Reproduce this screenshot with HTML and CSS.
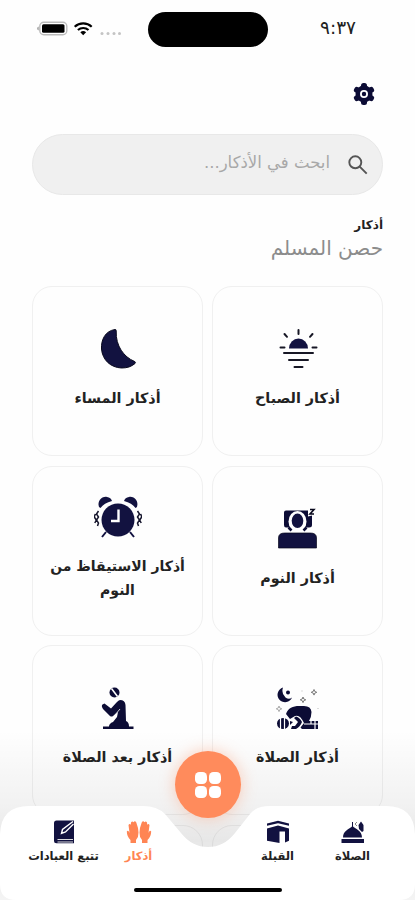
FILE: index.html
```html
<!DOCTYPE html>
<html lang="ar" dir="rtl">
<head>
    <meta charset="UTF-8">
    <meta name="viewport" content="width=device-width, initial-scale=1.0">
    <title>أذكار</title>
    <link rel="stylesheet" href="styles.css">
</head>
<body>
    <div class="screen">
        <div class="status-bar">
            <span class="time">٩:٣٧</span>
            <div class="island"></div>
            <div class="status-icons">
                <svg width="86" height="18" viewBox="0 0 86 18">
                    <rect x="2.800" y="3.200" width="27" height="12.600" rx="4" fill="#fff" stroke="#bbb" stroke-width="1.4"/>
                    <path d="M1.800 7.500v4Q0 11 0 9.500T1.800 7.500" fill="#aaa"/>
                    <rect x="5" y="5.200" width="22.500" height="8.600" rx="1.500" fill="#000"/>
                    <g fill="none" stroke="#000" stroke-width="2.200">
                        <path d="M37.700 7.800a12.500 12.500 0 0 1 17 0"/>
                        <path d="M40.900 11a8 8 0 0 1 10.600 0"/>
                    </g>
                    <path d="M43.300 13.300a4.500 4.500 0 0 1 5.800 0l-2.900 3z" fill="#000"/>
                    <g fill="#c4c4c4">
                        <circle cx="65" cy="14.500" r="1.500"/>
                        <circle cx="71" cy="14.500" r="1.500"/>
                        <circle cx="77" cy="14.500" r="1.500"/>
                        <circle cx="82.500" cy="14.500" r="1.500"/>
                    </g>
                </svg>
            </div>
        </div>

        <div class="toolbar">
            <svg width="22" height="24" viewBox="-11 -12 22 24">
                <g fill="#0c0c35">
                    <circle r="8.500"/>
                    <rect x="-3" y="-11" width="6" height="22" rx="2.500"/>
                    <rect x="-3" y="-11" width="6" height="22" rx="2.500" transform="rotate(60)"/>
                    <rect x="-3" y="-11" width="6" height="22" rx="2.500" transform="rotate(120)"/>
                </g>
                <circle r="3.100" fill="#0c0c35" stroke="#fff" stroke-width="1.800"/>
            </svg>
        </div>

        <div class="search">
            <svg width="20" height="20" viewBox="0 0 20 20" fill="none" stroke="#555" stroke-width="1.900">
                <circle cx="7.300" cy="7.300" r="6"/>
                <path d="M11.700 11.700l7 7"/>
            </svg>
            <span>ابحث في الأذكار...</span>
        </div>

        <h1 class="title">أذكار</h1>
        <p class="subtitle">حصن المسلم</p>

        <div class="grid">
            <div class="card">
                <svg width="42" height="42" viewBox="0 0 42 42">
                    <path d="M12 20.500a9.500 10 0 0 1 19 0z" fill="#121240"/>
                    <g stroke="#171725" stroke-width="2" stroke-linecap="round">
                        <path d="M21.500 2v4M7.500 6l2.500 2.800M35.500 6L33 8.800M3.500 19.500h4M35.500 19.500h4M7 25h29M12 32h19M17.500 39h8"/>
                    </g>
                </svg>
                <span>أذكار الصباح</span>
            </div>
            <div class="card">
                <svg width="42" height="42" viewBox="0 0 42 42">
                    <path d="M18 1.500C8 3 4 12 4.500 21c1 11 9 18.500 20 19 6 0 10-1.500 13.500-4.500.8-1 .4-1.800-.8-2.200C27 29 18.500 18 19.200 3q0-1.700-1.200-1.500z" fill="#121240" stroke="#08081c"/>
                </svg>
                <span>أذكار المساء</span>
            </div>

            <div class="card">
                <svg width="42" height="42" viewBox="0 0 42 42">
                    <path d="M9 2.500h22v6l4-1v9.500q0 2.500-3 2.500H9q-2 0-2-2.500V4.500q0-2 2-2z" fill="#0c0c35"/>
                    <path d="M33 1.500h4l-4 4.500h4" fill="none" stroke="#08081c" stroke-width="1.600"/>
                    <ellipse cx="20.500" cy="13.500" rx="9" ry="10.500" fill="#fff"/>
                    <ellipse cx="20.500" cy="12.800" rx="5.800" ry="7.200" fill="#121240"/>
                    <path d="M11.500 19.500l3 3M29.500 19.500l-3 3" stroke="#0c0c35" stroke-width="2.600"/>
                    <path d="M1.500 40V30q0-5 6-5h26q6 0 6 5v10z" fill="#121240" stroke="#08081c" stroke-width=".7"/>
                </svg>
                <span>أذكار النوم</span>
            </div>
            <div class="card">
                <svg width="48" height="42" viewBox="0 0 48 42">
                    <g fill="#121240">
                        <path d="M5 11C3 5 8 0 13 1q4 .5 5 4Q10 7 6.500 12z"/>
                        <path d="M43 11c2-6-3-11-8-10q-4 .5-5 4 8 2 11.500 7z"/>
                    </g>
                    <path d="M12 36l-4 5M36 36l4 5" stroke="#121240" stroke-width="2"/>
                    <circle cx="24" cy="24" r="16.500" fill="#121240"/>
                    <path d="M24.500 13.500v11.500H17" fill="none" stroke="#fff" stroke-width="2.400"/>
                    <path d="M4.500 15l-2 3 2 3-2 3 2 3-1 3M1.300 18l-1 3 2 3-1.500 3M43.500 15l2 3-2 3 2 3-2 3 1 3M46.700 18l1 3-2 3 1.500 3" fill="none" stroke="#15152c" stroke-width="1.500"/>
                </svg>
                <span class="wide">أذكار الاستيقاظ من النوم</span>
            </div>

            <div class="card">
                <svg width="44" height="42" viewBox="0 0 44 42">
                    <g fill="#0c0c35">
                        <path d="M7 .5A7.500 7.500 0 1 0 16 10.500Q13 13 9.500 10.500 5 6.500 7 .5z"/>
                        <circle cx="12" cy="5.500" r="2"/>
                        <path d="M10 27c2-6 7-8 13-8h5q7 0 7.500 6 0 5-2.500 9h9v8H26l-1.500-1.500L28 36q-4-9-9-7l-5 3z"/>
                        <path d="M20 29.500q4 1 6 5.500-2 5-6 7h-5l1-3h3l3-4-4-4z"/>
                        <ellipse cx="7" cy="36.500" rx="6" ry="5.500"/>
                        <path d="M14 34l3 1-3 3z"/>
                    </g>
                    <path d="M4.500 31v11M8.500 31v11M28 37h15M35 33v4M39 33v9" fill="none" stroke="#fff" stroke-width="1.200"/>
                    <g fill="none" stroke="#777" stroke-width="1">
                        <path d="M38 2.500l.8 2 2 .8-2 .8-.8 2-.8-2-2-.8 2-.8zM27 10l.8 2 2 .8-2 .8-.8 2-.8-2-2-.8 2-.8z"/>
                        <path d="M3 19l.8 2 2 .8-2 .8-.8 2-.8-2-2-.8 2-.8z" stroke="#aaa"/>
                        <path d="M25.500 4h1M41.500 21.500h1" stroke="#bbb"/>
                    </g>
                </svg>
                <span>أذكار الصلاة</span>
            </div>
            <div class="card">
                <svg width="42" height="42" viewBox="0 0 42 42">
                    <circle cx="17.500" cy="5.500" r="5" fill="#0c0c35"/>
                    <path d="M14.500 1.500l6 8" stroke="#fff" stroke-width="1.500"/>
                    <path d="M23 13q5 0 5.500 5l.5 16q3 1 3 5.500h4.500V42H6v-2.500h6q0-3 4-4.500l4-5 1-5-5 4q-1.500 1-3 0l-7-7q-2-3-.500-4.500l2-1 6.500 5 5.500-6q2-2.500 3.500-2.500z" fill="#0c0c35"/>
                    <path d="M17 29l6-7" stroke="#fff" stroke-width=".8"/>
                </svg>
                <span>أذكار بعد الصلاة</span>
            </div>

            <div class="card"></div>
            <div class="card"></div>
        </div>

        <div class="fade"></div>

        <div class="bottom-nav">
            <svg class="nav-shape" width="415" height="94" viewBox="0 0 415 94">
                <path d="M0 28Q1 0 29 0H143Q157 0 165 8L181 27Q192 41 208 41T235 27L250 8Q256 0 270 0H386Q414 0 415 28V78Q415 94 399 94H16Q0 94 0 78z" fill="#fff"/>
            </svg>
            <div class="nav-items">
                <div class="nav-item">
                    <svg width="26" height="24" viewBox="0 0 26 24" fill="#121240">
                        <path d="M3 17.500c0-7 6-8 9.500-11.500 3.500 3.500 9.500 4.500 9.500 11.500zM1.500 19H24v4H1.500zM12 2h1v5h-1zM18.500 5l2.500-3.500L23.500 5v6l-1.500 1-3-3z"/>
                        <path d="M17 2l-2 2 2 2" fill="none" stroke="#888"/>
                    </svg>
                    <span>الصلاة</span>
                </div>
                <div class="nav-item">
                    <svg width="26" height="24" viewBox="0 0 26 24" fill="#121240">
                        <path d="M2 3.500L13 .8l11 2.700v2.300L13 3.200 2 5.800zM2 8.500l11-3 11 3v12.300l-4 1.700V11.500h-5.500v11.500L2 20.800z"/>
                    </svg>
                    <span>القبلة</span>
                </div>
                <div class="nav-item active">
                    <svg width="26" height="24" viewBox="0 0 26 24" fill="#ff8554">
                        <path d="M4.500 23v-3Q1 17 .8 11.500q1-1.500 2 0l.7 1.500L2.500 5q1-2 2.300-.3L5 2.500q1.200-2 2.500-.3Q9 .3 10.300 2.500q2 5 2.200 10 .2 4.500-2.500 7.500v3z"/>
                        <path d="M21.500 23v-3q3.500-3 3.700-8.500-1-1.500-2 0l-.7 1.500 1-8q-1-2-2.300-.3L21 2.500q-1.200-2-2.500-.3-1.500-1.900-2.800.3-2 5-2.200 10-.2 4.500 2.500 7.500v3z"/>
                    </svg>
                    <span>أذكار</span>
                </div>
                <div class="nav-item">
                    <svg width="26" height="24" viewBox="0 0 26 24">
                        <path d="M5.500.5H23v22.800H5.500q-2.500 0-2.500-2.500V3Q3 .5 5.500.5z" fill="#121240"/>
                        <path d="M6.500 19.500H22M6.500 22H22" stroke="#ddd" stroke-width="1.200"/>
                        <path d="M22 1.500l-10.500 8-1 4 4-1.500 8-8" fill="#121240" stroke="#fff" stroke-width="1.400"/>
                    </svg>
                    <span>تتبع العبادات</span>
                </div>
            </div>
            <div class="home-bar"></div>
        </div>

        <button class="menu-btn" aria-label="القائمة">
            <svg width="26" height="26" viewBox="0 0 26 26" fill="#fff">
                <rect width="12" height="12" rx="4.500"/>
                <rect x="14" width="12" height="12" rx="4.500"/>
                <rect y="14" width="12" height="12" rx="4.500"/>
                <rect x="14" y="14" width="12" height="12" rx="4.500"/>
            </svg>
        </button>
    </div>
</body>
</html>
```
FILE: styles.css
```css
* {
    box-sizing: border-box;
}
body {
    margin: 0;
    background: #fefefe;
    font-family: "DejaVu Sans", sans-serif;
    color: #222;
}
svg {
    display: block;
    flex: none;
}
.screen {
    position: relative;
    width: 415px;
    height: 900px;
    overflow: hidden;
}
.status-bar {
    display: grid;
    grid-template-columns: 147px 120px 148px;
    height: 58px;
    padding-top: 12px;
}
.time {
    padding: 4px 7px 0 0;
    text-align: center;
    font-size: 18.5px;
    line-height: 24px;
    color: #222;
}
.island {
    height: 35px;
    border-radius: 18px;
    background: #000;
}
.status-icons {
    direction: ltr;
    padding: 7px 0 0 37px;
}
.toolbar {
    height: 76px;
    padding: 24px 40px 0 0;
}
.search {
    display: flex;
    align-items: center;
    gap: 18px;
    width: 351px;
    height: 61px;
    margin: 0 32px;
    padding: 0 14px 0 0;
    border: 1px solid #e8e8e8;
    border-radius: 31px;
    background: #f0f0f0;
}
.search span {
    padding-bottom: 4px;
    font-size: 16.5px;
    color: #a8a8a8;
}
.title {
    margin: 20px 32px 0;
    font-size: 12px;
    line-height: 20px;
}
.subtitle {
    margin: 0 32px;
    font-size: 20px;
    line-height: 26px;
    color: #8c8c8c;
}
.grid {
    display: grid;
    grid-template-columns: 171px 171px;
    grid-auto-rows: 170px;
    gap: 9.7px 9px;
    margin: 25px 32px 0;
}
.card {
    display: flex;
    flex-direction: column;
    align-items: center;
    justify-content: center;
    gap: 16px;
    padding: 0 14px 4px;
    border: 1.5px solid #f0f0f0;
    border-radius: 20px;
    background: #fefefe;
    text-align: center;
    font-size: 14.3px;
    font-weight: bold;
    line-height: 24px;
}
.card .wide {
    font-size: 14px;
}
/* soft shade above the bottom bar */
.fade {
    position: absolute;
    left: 0;
    right: 0;
    bottom: 0;
    height: 170px;
    background: linear-gradient(rgba(0, 0, 0, 0), rgba(0, 0, 0, 0.05) 45%, rgba(0, 0, 0, 0.09) 65%, rgba(0, 0, 0, 0.04));
}
.bottom-nav {
    position: absolute;
    left: 0;
    bottom: 0;
    width: 415px;
    height: 94px;
}
.nav-shape {
    position: absolute;
    left: 0;
    top: 0;
}
.nav-items {
    position: relative;
    display: grid;
    grid-template-columns: 75px 75px 139px 75px;
    padding: 14px 25px 0 0;
}
.nav-item {
    display: flex;
    flex-direction: column;
    align-items: center;
    gap: 2px;
    font-size: 11.5px;
    font-weight: bold;
    line-height: 20px;
    white-space: nowrap;
}
/* the padding leaves room for the round menu button */
.nav-item.active {
    padding-right: 64px;
    color: #ff8554;
}
.home-bar {
    position: relative;
    width: 148px;
    height: 4px;
    margin: 22px auto 0;
    border-radius: 2px;
    background: #000;
}
.menu-btn {
    position: absolute;
    left: 175px;
    top: 751px;
    display: flex;
    align-items: center;
    justify-content: center;
    width: 66px;
    height: 67px;
    padding: 0;
    border: none;
    border-radius: 50%;
    background: #ff8b5c;
    box-shadow: 0 0 16px rgba(255, 139, 92, 0.4);
}
```
